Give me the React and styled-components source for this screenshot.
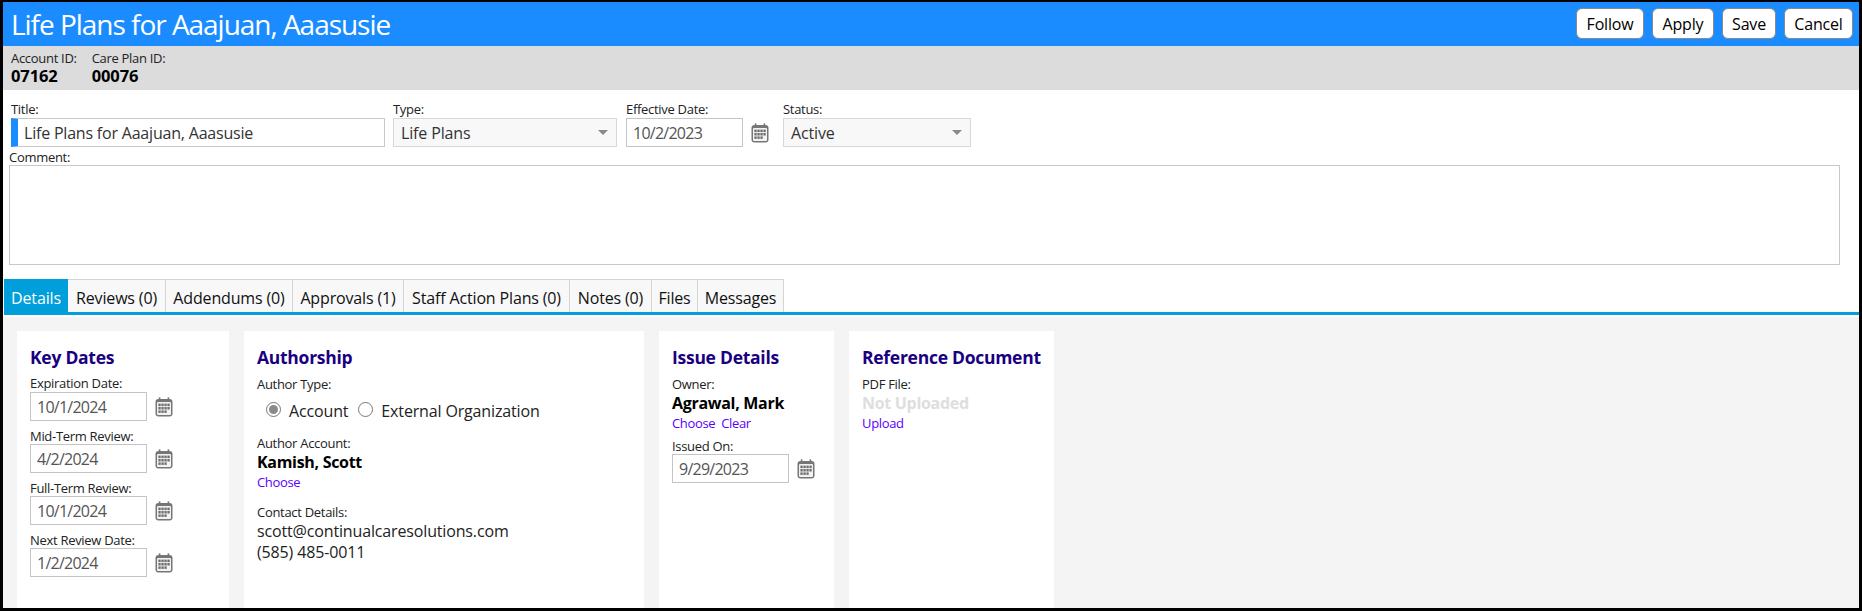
import React from "react";
import styled, { createGlobalStyle } from "styled-components";

const Global = createGlobalStyle`
  html, body { margin: 0; padding: 0; background: #000; }
  body { font-family: "Open Sans", "Noto Sans", sans-serif; color: #000; letter-spacing: -0.15px; }
  * { box-sizing: border-box; }
`;
const Frame = styled.div`
  width: 1862px; height: 611px; padding: 2px 3px 3px 3px; background: #000; overflow: hidden;
`;
const Page = styled.div`
  height: 100%; background: #fff; display: flex; flex-direction: column;
`;
const Header = styled.header`
  height: 44px; flex: none; background: #1a8cff; display: flex; align-items: center; justify-content: space-between; padding: 0 6px 0 8px;
`;
const Title = styled.h1`
  margin: 0; font-size: 28px; font-weight: 400; color: #fff; line-height: 44px; letter-spacing: -1.03px;
`;
const Actions = styled.div`display: flex; gap: 8px; padding-bottom: 1px;`;
const ActionButton = styled.button`
  height: 31px; padding: 0; width: ${p => p.$w}px; background: #fff; border: 1px solid #8a8a8a; border-radius: 6px;
  font: 400 16px "Open Sans", sans-serif; letter-spacing: -0.2px; color: #000;
`;
const InfoBar = styled.div`
  height: 44px; flex: none; background: #dcdcdc; display: flex; gap: 15px; padding: 4px 8px 0;
`;
const InfoItem = styled.div`display: flex; flex-direction: column;`;
const Label = styled.label`
  display: block; font-size: 13px; line-height: 16px; color: #222; letter-spacing: -0.3px;
`;
const InfoValue = styled.div`font-size: 16.5px; font-weight: 700; line-height: 20px; letter-spacing: -0.1px;`;
const FormArea = styled.div`padding: 12px 19px 0 6px; flex: none;`;
const FormRow = styled.div`display: flex; padding-left: 2px;`;
const Field = styled.div`
  width: ${p => p.$w}px; margin-right: ${p => p.$mr || 0}px; display: flex; flex-direction: column;
`;
const FieldLabel = styled(Label)`height: 16px; line-height: 15px;`;
const TextInput = styled.input`
  width: 100%; height: 29px; border: 1px solid #c8c8c8; border-left: 7px solid #1a8cff; padding: 0 0 0 6px; outline: none;
  font: 400 16px "Open Sans", sans-serif; letter-spacing: -0.2px; color: #333;
`;
const DateBox = styled.div`display: flex; align-items: center; gap: 8px;`;
const DateInput = styled.input`
  width: 117px; height: 29px; border: 1px solid #c4c4c4; padding: 0 0 0 6px; outline: none; background: #fff;
  font: 400 16px "Open Sans", sans-serif; letter-spacing: -0.75px; color: #555;
`;
const SelectBox = styled.div`
  width: 100%; height: 29px; border: 1px solid #d8d8d8; background: #f8f8f8; display: flex; align-items: center; justify-content: space-between;
  padding: 0 8px 0 7px; font-size: 16px; color: #333;
`;
const Caret = styled.span`
  width: 0; height: 0; border-left: 5px solid transparent; border-right: 5px solid transparent; border-top: 5px solid #8a8a8a;
`;
const CommentLabel = styled(Label)`margin-top: 3px; height: 15px; line-height: 15px;`;
const Comment = styled.textarea`
  display: block; width: 100%; height: 100px; resize: none; border: 1px solid #c8c8c8; outline: none; background: #fff;
`;
const TabBar = styled.nav`
  flex: none; margin: 14px 0 0 1px; display: flex; height: 36px; border-bottom: 3px solid #009fdb; gap: 0;
`;
const Tab = styled.div`
  height: 33px; width: ${p => p.$w}px; display: flex; align-items: center; justify-content: center; padding-top: 3px; font-size: 16px;
  background: ${p => (p.$active ? "#009fdb" : "#f8f8f8")};
  color: ${p => (p.$active ? "#fff" : "#111")};
  border: 1px solid ${p => (p.$active ? "#009fdb" : "#d4d4d4")};
  border-bottom: none;
  border-left-width: ${p => (p.$active ? 1 : 0)}px;
`;
const Spacer = styled.div`flex: none; height: 2px; background: #fff;`;
const Content = styled.main`
  flex: 1; min-height: 0; background: #f4f4f4; padding: 14px 0 0 14px; display: flex; gap: 15px;
`;
const Card = styled.section`
  width: ${p => p.$w}px; background: #fff; padding: 15px 13px 0;
`;
const CardTitle = styled.h2`
  margin: 0 0 8px; font-size: 17.5px; line-height: 22px; font-weight: 700; color: #1a0080; letter-spacing: -0.27px;
`;
const Stack = styled.div`margin-top: ${p => p.$mt || 0}px;`;
const DateField = styled.div`
  margin-top: ${p => (p.$first ? 0 : 8)}px;
`;
const IssuedField = styled(DateField)`margin-top: 6px;`;
const DateLabel = styled(Label)`line-height: 15px; height: ${p => (p.$first ? 16 : 15)}px;`;
const Value = styled.div`font-size: 16px; font-weight: 700; line-height: 23px; letter-spacing: -0.3px;`;
const Muted = styled(Value)`color: #dedede;`;
const LinkRow = styled.div`display: flex; gap: 6px; height: 18px; line-height: 17px;`;
const TextLink = styled.a`font-size: 13px; color: #5a00ff; letter-spacing: -0.35px;`;
const RadioRow = styled.div`display: flex; align-items: center; padding: 6px 0 0 9px; height: 32px; font-size: 16px;`;
const RadioText = styled.span`margin: 0 10px 0 8px; color: #222;`;
const Radio = styled.span`
  width: 15px; height: 15px; border-radius: 50%; border: 1px solid #777; background: #fff; margin-top: -3px;
  display: inline-flex; align-items: center; justify-content: center;
  &::after { content: ""; width: 9px; height: 9px; border-radius: 50%; background: ${p => (p.$on ? "#8a8a8a" : "transparent")}; }
`;
const Contact = styled.div`margin-top: 1px; font-size: 16px; line-height: 21px; color: #222;`;

const Cal = () => (
  <svg width="18" height="20" viewBox="0 0 18 20" aria-hidden="true">
    <rect x="0.5" y="2" width="17" height="17.5" rx="3" fill="#767676" />
    <rect x="2" y="5" width="14" height="13" rx="1" fill="#f2f2f2" />
    <rect x="3.8" y="0.3" width="1.6" height="3" fill="#767676" />
    <rect x="12.6" y="0.3" width="1.6" height="3" fill="#767676" />
    {[6.6, 10, 13.4].map(y =>
      [3.4, 6.4, 9.4, 12.4].map(x =>
        y === 13.4 && x === 12.4 ? null : <rect key={`${x}-${y}`} x={x} y={y} width="2.3" height="2.5" fill="#6e6e6e" />
      )
    )}
  </svg>
);

const DateWidget = ({ value }) => (
  <DateBox>
    <DateInput readOnly value={value} />
    <Cal />
  </DateBox>
);

const tabs = [
  ["Details", 64], ["Reviews (0)", 98], ["Addendums (0)", 127], ["Approvals (1)", 111],
  ["Staff Action Plans (0)", 166], ["Notes (0)", 82], ["Files", 46], ["Messages", 86],
];
const keyDates = [
  ["Expiration Date:", "10/1/2024"], ["Mid-Term Review:", "4/2/2024"],
  ["Full-Term Review:", "10/1/2024"], ["Next Review Date:", "1/2/2024"],
];

export default function App() {
  return (
    <Frame>
      <Global />
      <Page>
        <Header>
          <Title>Life Plans for Aaajuan, Aaasusie</Title>
          <Actions>
            <ActionButton $w={68}>Follow</ActionButton>
            <ActionButton $w={62}>Apply</ActionButton>
            <ActionButton $w={54}>Save</ActionButton>
            <ActionButton $w={69}>Cancel</ActionButton>
          </Actions>
        </Header>
        <InfoBar>
          <InfoItem><Label>Account ID:</Label><InfoValue>07162</InfoValue></InfoItem>
          <InfoItem><Label>Care Plan ID:</Label><InfoValue>00076</InfoValue></InfoItem>
        </InfoBar>
        <FormArea>
          <FormRow>
            <Field $w={374} $mr={8}><FieldLabel>Title:</FieldLabel><TextInput readOnly value="Life Plans for Aaajuan, Aaasusie" /></Field>
            <Field $w={224} $mr={9}><FieldLabel>Type:</FieldLabel><SelectBox>Life Plans<Caret /></SelectBox></Field>
            <Field $w={157}><FieldLabel>Effective Date:</FieldLabel><DateWidget value="10/2/2023" /></Field>
            <Field $w={188}><FieldLabel>Status:</FieldLabel><SelectBox>Active<Caret /></SelectBox></Field>
          </FormRow>
          <CommentLabel>Comment:</CommentLabel>
          <Comment readOnly />
        </FormArea>
        <TabBar>
          {tabs.map(([t, w], i) => <Tab key={t} $w={w} $active={i === 0}>{t}</Tab>)}
        </TabBar>
        <Spacer />
        <Content>
          <Card $w={212}>
            <CardTitle>Key Dates</CardTitle>
            {keyDates.map(([l, v], i) => (
              <DateField key={l} $first={i === 0}>
                <DateLabel $first={i === 0}>{l}</DateLabel>
                <DateWidget value={v} />
              </DateField>
            ))}
          </Card>
          <Card $w={400}>
            <CardTitle>Authorship</CardTitle>
            <Label>Author Type:</Label>
            <RadioRow>
              <Radio $on /><RadioText>Account</RadioText>
              <Radio /><RadioText>External Organization</RadioText>
            </RadioRow>
            <Stack $mt={11}>
              <Label>Author Account:</Label>
              <Value>Kamish, Scott</Value>
              <LinkRow><TextLink>Choose</TextLink></LinkRow>
            </Stack>
            <Stack $mt={12}>
              <Label>Contact Details:</Label>
              <Contact>scott@continualcaresolutions.com<br />(585) 485-0011</Contact>
            </Stack>
          </Card>
          <Card $w={175}>
            <CardTitle>Issue Details</CardTitle>
            <Label>Owner:</Label>
            <Value>Agrawal, Mark</Value>
            <LinkRow><TextLink>Choose</TextLink><TextLink>Clear</TextLink></LinkRow>
            <IssuedField>
              <DateLabel>Issued On:</DateLabel>
              <DateWidget value="9/29/2023" />
            </IssuedField>
          </Card>
          <Card $w={205}>
            <CardTitle>Reference Document</CardTitle>
            <Label>PDF File:</Label>
            <Muted>Not Uploaded</Muted>
            <LinkRow><TextLink>Upload</TextLink></LinkRow>
          </Card>
        </Content>
      </Page>
    </Frame>
  );
}
